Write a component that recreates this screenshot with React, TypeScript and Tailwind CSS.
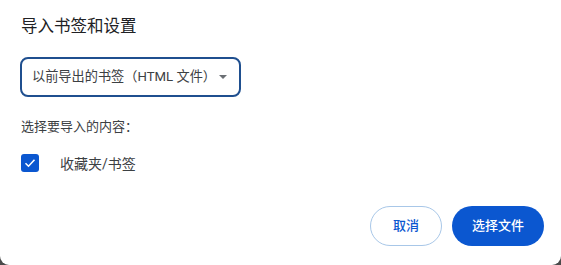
import React from 'react';

const font = { fontFamily: 'Roboto, "Noto Sans CJK SC", "Noto Sans", sans-serif' };

export default function App() {
  return (
    <div className="h-[265px] w-[561px] bg-[#4a4a4a]" style={font}>
      <div className="flex h-full w-full flex-col rounded-b-[9px] bg-white pl-[21px] pr-[17px]">
        <h1 className="pt-[15px] text-[16.5px] leading-6 font-normal text-[#202124]">导入书签和设置</h1>

        <button className="mt-[18px] -ml-px flex h-[40px] w-[221px] items-center rounded-[8px] border-2 border-[#1f4f8f] pl-[10px] pr-[12px] text-left">
          <span className="text-[13.2px] leading-5 text-[#3c4043]">以前导出的书签（HTML 文件）</span>
          <svg className="ml-auto" width="8" height="4" viewBox="0 0 8 4">
            <path d="M0 0h8L4 4z" fill="#6b6f74" />
          </svg>
        </button>

        <div className="mt-[20px] text-[13px] leading-5 text-[#3c4043]">选择要导入的内容：</div>

        <label className="mt-[15px] flex items-center">
          <span className="flex h-[18px] w-[18px] items-center justify-center rounded-[3px] bg-[#0b57d0]">
            <svg width="12" height="10" viewBox="0 0 12 10">
              <path d="M1.5 5.2l3 3 6-6.5" fill="none" stroke="white" strokeWidth="1.6" />
            </svg>
          </span>
          <span className="ml-[21px] mt-[2px] text-[14px] leading-5 text-[#3c4043]">收藏夹/书签</span>
        </label>

        <div className="mt-auto mb-[19px] flex justify-end gap-[10px]">
          <button className="h-[40px] w-[72px] rounded-full border border-[#a8c7e8] text-[13px] font-medium text-[#0b57d0]">
            取消
          </button>
          <button className="h-[40px] w-[92px] rounded-full bg-[#0b57d0] text-[13px] font-medium text-white">
            选择文件
          </button>
        </div>
      </div>
    </div>
  );
}
